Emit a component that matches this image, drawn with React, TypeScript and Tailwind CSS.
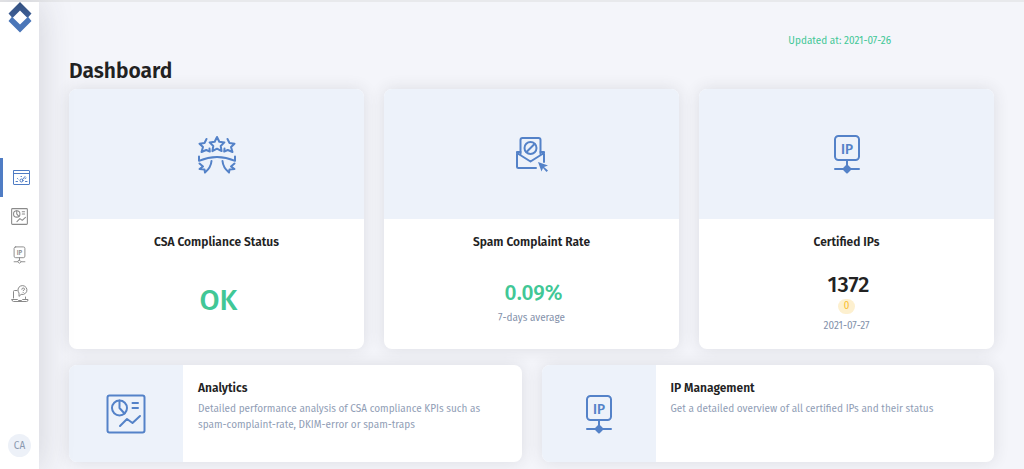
import type { ReactNode } from "react";

function Svg({ box, className, width = 2, children }: { box: string; className: string; width?: number; children: ReactNode }) {
  return (
    <svg viewBox={box} className={className} fill="none" stroke="currentColor" strokeWidth={width} strokeLinecap="round" strokeLinejoin="round" aria-hidden="true">
      {children}
    </svg>
  );
}

function Logo() {
  return (
    <svg viewBox="0 0 24 31" className="h-[31px] w-6" aria-hidden="true">
      <defs>
        <linearGradient id="logo" x1="0" y1="0" x2="0" y2="1">
          <stop offset="0" stopColor="#33507f" />
          <stop offset="1" stopColor="#3f5f97" />
        </linearGradient>
      </defs>
      <path d="M12 0 23.5 11.5 19.500 16 12 8.500 4.500 16 .5 11.500z" fill="url(#logo)" />
      <path d="M12 30.500.5 19 4 14.800 12 22.500 20 14.800 23.500 19z" fill="#4a76b8" />
    </svg>
  );
}

function StarsIcon() {
  return (
    <Svg box="0 0 40 40" className="size-10">
      <path d="M20 3l2.300 4.700 5.100.7-3.700 3.600.9 5.100-4.600-2.400-4.600 2.400.9-5.100-3.700-3.600 5.100-.7z" />
      <path d="M9.500 5 7.500 9l-5 .7L6 13l-1.500 5 4.700-2 3.600 1.500-.3-3" />
      <path d="M30.500 5 32.500 9l5 .7L34 13l1.500 5-4.700-2-3.600 1.500.3-3" />
      <path d="M2 22.500v4.300q18-7.500 36 0v-4.300" />
      <path d="M2.500 29.500 6 32.500 2.500 35l5 .5.5 3Q14 33.500 14.500 27" />
      <path d="M37.500 29.500 34 32.500l3.500 2.500-5 .5-.5 3Q26 33.500 25.500 27" />
    </Svg>
  );
}

function SpamIcon() {
  return (
    <Svg box="0 0 36 36" className="size-9">
      <path d="M6.500 18V4Q6.500 2 8.500 2H24.500q2 0 2 2V18" />
      <circle cx="16.500" cy="12" r="6" />
      <path d="m12.500 16 8-8M6.500 16H3V30.500q0 1.500 1.500 1.500H22M26.500 16H30V26M3 17l13.500 8.500L30 17" />
      <path d="m24 26 10 3.500-4 1.500 4 3.500-1.500 1.500-3.500-4-1.500 3.500z" fill="currentColor" stroke="none" />
    </Svg>
  );
}

function IpIcon({ className, width = 2 }: { className: string; width?: number }) {
  return (
    <Svg box="0 0 28 40" className={className} width={width}>
      <rect x="2" y="2" width="24" height="24" rx="3.500" />
      <text x="14" y="19.500" textAnchor="middle" fontSize="15" fontWeight="500" fill="currentColor" stroke="none" className="font-['Fira_Sans_Condensed','Fira_Sans','Open_Sans',sans-serif]">IP</text>
      <path d="M14 26v9M2 35h24" />
      <path d="m14 31.500 3.500 3.500-3.500 3.500-3.500-3.500z" fill={width === 2 ? "currentColor" : "#fff"} />
    </Svg>
  );
}

function AnalyticsIcon({ className, width = 2 }: { className: string; width?: number }) {
  return (
    <Svg box="0 0 40 40" className={className} width={width}>
      <rect x="1.500" y="1.500" width="37" height="37" rx="2" />
      <circle cx="13.500" cy="14" r="7.500" />
      <path d="M13.500 6.500V14l5 5.500M26.500 9H32M26.500 14H32M14 32l7-7 5.500 4L34 22" />
    </Svg>
  );
}

function DashboardIcon() {
  return (
    <Svg box="0 0 17 15" className="h-[15px] w-[17px]" width={1}>
      <rect x=".5" y=".5" width="16" height="14" rx=".5" />
      <path d="M.5 3.500h16M3 11.500h1.500M4.500 8.500l.5.500M12.500 11.500H14M12 8.500l1-.5M8 6.500h.5" />
      <circle cx="8.500" cy="10.500" r="1.500" />
      <path d="m9.500 9.500 2.500-3" />
    </Svg>
  );
}

function HelpIcon() {
  return (
    <Svg box="0 0 18 18" className="size-[18px]" width={1}>
      <path d="M2.500 13V6.500q0-1 1-1H6M14.500 12v1.500M1 14.500h5.500l1 1h3l1-1H17v.5q0 1.500-1.500 1.500h-13Q1 16.500 1 15z" />
      <path d="M8 11 8 8A4.500 4.500 0 1 1 10.500 9.500z" />
      <path d="M10.800 4.300q0-1.300 1.400-1.300t1.400 1.300q0 .7-1.400 1.300M12.200 7.500v.1" />
    </Svg>
  );
}

function NavItem({ label, active = false, children }: { label: string; active?: boolean; children: ReactNode }) {
  return (
    <a
      href="#"
      aria-label={label}
      aria-current={active ? "page" : undefined}
      className={`flex h-[39px] items-center justify-center border-l-[3px] ${active ? "border-[#4f7cc4] text-[#4f7cc4]" : "border-transparent pr-[3px] text-[#8a8a8a]"}`}
    >
      {children}
    </a>
  );
}

const shadow = "shadow-[0_0_16px_rgba(50,50,60,0.12)]";

function StatCard({ title, icon, children }: { title: string; icon: ReactNode; children: ReactNode }) {
  return (
    <section className={`overflow-hidden rounded-lg bg-white text-center ${shadow}`}>
      <div className="flex h-[130px] items-center justify-center bg-[#edf2fa] text-[#5482c8]">{icon}</div>
      <div className="flex h-[130px] flex-col items-center pt-[13px]">
        <h2 className="text-[12px] leading-5 font-semibold text-[#222]">{title}</h2>
        {children}
      </div>
    </section>
  );
}

function LinkCard({ title, text, icon }: { title: string; text: string; icon: ReactNode }) {
  return (
    <a href="#" className={`flex min-h-[97px] overflow-hidden rounded-lg bg-white ${shadow}`}>
      <div className="flex w-[114px] shrink-0 items-center justify-center bg-[#edf2fa] text-[#5482c8]">{icon}</div>
      <div className="px-[15px] pt-[13px]">
        <h2 className="text-[12px] leading-5 font-semibold text-[#222]">{title}</h2>
        <p className="pt-[3px] text-[10px] leading-4 text-[#8f9db5]">{text}</p>
      </div>
    </a>
  );
}

export default function App() {
  return (
    <div className="flex min-h-screen border-t-2 border-[#e8e9ec] bg-[#f4f5fa] font-['Fira_Sans','Noto_Sans',sans-serif]">
      <aside className="z-10 flex w-[39px] shrink-0 flex-col bg-white pb-[13px] shadow-[0_0_36px_rgba(50,50,60,0.18)]">
        <a href="#" aria-label="Home" className="flex justify-center"><Logo /></a>
        <nav className="flex flex-1 flex-col justify-center pt-1">
          <NavItem label="Dashboard" active><DashboardIcon /></NavItem>
          <NavItem label="Analytics"><AnalyticsIcon className="size-[17px]" width={2.500} /></NavItem>
          <NavItem label="IP Management"><IpIcon className="h-[18px] w-[13px]" width={2.100} /></NavItem>
          <NavItem label="Help"><HelpIcon /></NavItem>
        </nav>
        <button type="button" className="mx-auto size-[23px] rounded-full bg-[#edf1f8] text-[10px] leading-none text-[#8b99b0]">CA</button>
      </aside>

      <main className="min-w-0 flex-1 pr-[30px] pb-2 pl-[30px]">
        <p className="pt-[31px] pr-[103px] text-right text-[10px] leading-4 text-[#41c796]">Updated at: 2021-07-26</p>
        <h1 className="pt-[7px] text-[21px] leading-[30px] font-semibold text-[#222]">Dashboard</h1>
        <div className="grid grid-cols-3 gap-5 pt-[3px]">
          <StatCard title="CSA Compliance Status" icon={<StarsIcon />}>
            <p className="pt-[31px] pl-1 text-[29px] leading-9 font-medium text-[#41c796]">OK</p>
          </StatCard>
          <StatCard title="Spam Complaint Rate" icon={<SpamIcon />}>
            <p className="pt-[27px] pl-1 text-[21px] leading-7 font-medium text-[#41c796]">0.09%</p>
            <p className="pt-[3px] text-[10px] leading-4 text-[#8391aa]">7-days average</p>
          </StatCard>
          <StatCard title="Certified IPs" icon={<IpIcon className="h-10 w-7" />}>
            <p className="pt-[19px] pl-1 text-[22px] leading-7 font-medium text-[#222]">1372</p>
            <span className="rounded-full bg-[#fdf0cf] px-1.5 text-[10px] leading-[15px] text-[#f9bd2c]">0</span>
            <p className="pt-1 text-[10px] leading-4 text-[#8391aa]">2021-07-27</p>
          </StatCard>
        </div>
        <div className="grid grid-cols-2 gap-5 pt-4">
          <LinkCard
            title="Analytics"
            text="Detailed performance analysis of CSA compliance KPIs such as spam-complaint-rate, DKIM-error or spam-traps"
            icon={<AnalyticsIcon className="size-10" />}
          />
          <LinkCard title="IP Management" text="Get a detailed overview of all certified IPs and their status" icon={<IpIcon className="h-10 w-7" />} />
        </div>
      </main>
    </div>
  );
}
